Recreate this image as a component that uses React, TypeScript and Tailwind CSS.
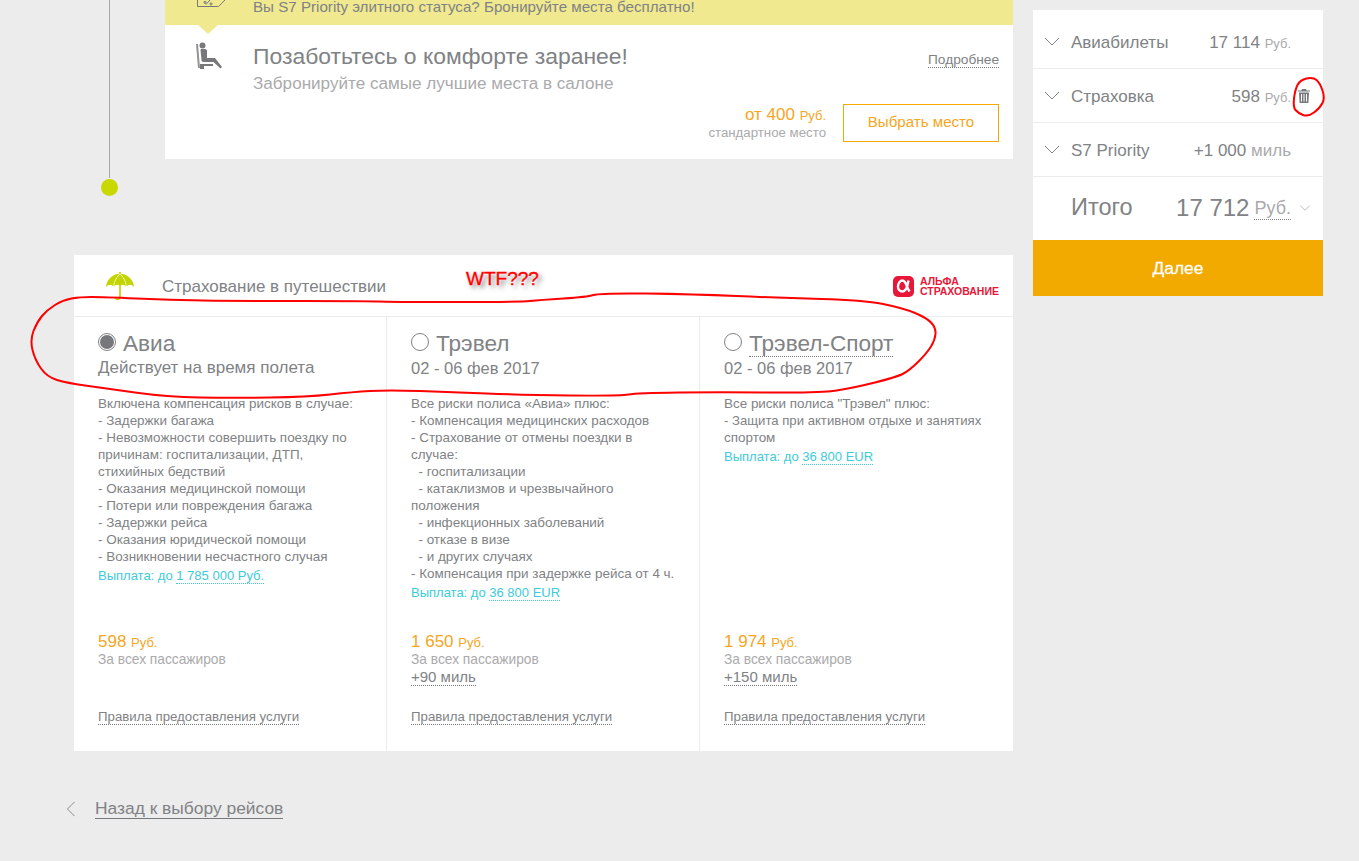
import React from "react";

const Chevron = ({ className = "" }: { className?: string }) => (
  <svg viewBox="0 0 16 9" className={className} fill="none" stroke="currentColor" strokeWidth="1">
    <path d="M1 1l7 7 7-7" />
  </svg>
);

const Dotted = ({ children, className = "" }: { children: React.ReactNode; className?: string }) => (
  <span className={`border-b border-dotted ${className}`}>{children}</span>
);

const SummaryRow = ({
  label,
  value,
  unit,
  trash,
  h,
}: {
  label: string;
  value: string;
  unit: string;
  trash?: boolean;
  h: string;
}) => (
  <div className={`relative flex items-center border-b-[1px] border-[#ececec] pl-[11px] pr-[32px] ${h}`}>
    <Chevron className="mb-[3px] h-[9px] w-[16px] text-[#808285]" />
    <span className="ml-[11px] text-[17px] text-[#808285]">{label}</span>
    <span className="ml-auto text-[17px] text-[#808285]">
      {value} <span className={unit === "Руб." ? "text-[13px] text-[#aaaaac]" : "text-[17px] text-[#aaaaac]"}>{unit}</span>
    </span>
    {trash && (
      <svg viewBox="0 0 12 14" className="absolute left-[265px] top-[20px] h-[14px] w-[12px] text-[#77787b]" fill="currentColor">
        <path d="M4 0h4l.6 1.4H12v1.2H0V1.4h3.4zM1 3.4h10L10.4 14H1.6zM3 5v7.6h1V5zm2.5 0v7.6h1V5zM8 5v7.6h1V5z" />
      </svg>
    )}
  </div>
);

const Radio = ({ on }: { on?: boolean }) => (
  <span className="mt-[3px] flex h-[18px] w-[18px] shrink-0 items-center justify-center rounded-full border border-[#808285] bg-white">
    {on && <span className="h-[14px] w-[14px] rounded-full bg-[#77787b]" />}
  </span>
);

type Col = {
  title: string;
  titleDotted?: boolean;
  on?: boolean;
  sub: string;
  lines: string[];
  payout: string;
  price: string;
  miles?: string;
  border?: boolean;
};

const cols: Col[] = [
  {
    title: "Авиа",
    on: true,
    sub: "Действует на время полета",
    lines: [
      "Включена компенсация рисков в случае:",
      "- Задержки багажа",
      "- Невозможности совершить поездку по",
      "причинам: госпитализации, ДТП,",
      "стихийных бедствий",
      "- Оказания медицинской помощи",
      "- Потери или повреждения багажа",
      "- Задержки рейса",
      "- Оказания юридической помощи",
      "- Возникновении несчастного случая",
    ],
    payout: "1 785 000 Руб.",
    price: "598",
    border: true,
  },
  {
    title: "Трэвел",
    sub: "02 - 06 фев 2017",
    lines: [
      "Все риски полиса «Авиа» плюс:",
      "- Компенсация медицинских расходов",
      "- Страхование от отмены поездки в",
      "случае:",
      "\u00a0\u00a0- госпитализации",
      "\u00a0\u00a0- катаклизмов и чрезвычайного",
      "положения",
      "\u00a0\u00a0- инфекционных заболеваний",
      "\u00a0\u00a0- отказе в визе",
      "\u00a0\u00a0- и других случаях",
      "- Компенсация при задержке рейса от 4 ч.",
    ],
    payout: "36 800 EUR",
    price: "1 650",
    miles: "+90 миль",
    border: true,
  },
  {
    title: "Трэвел-Спорт",
    titleDotted: true,
    sub: "02 - 06 фев 2017",
    lines: [
      'Все риски полиса "Трэвел" плюс:',
      "- Защита при активном отдыхе и занятиях",
      "спортом",
    ],
    payout: "36 800 EUR",
    price: "1 974",
    miles: "+150 миль",
  },
];

const InsuranceColumn = ({ c }: { c: Col }) => (
  <div className={`flex w-[313px] flex-col pl-[24px] pr-[8px] ${c.border ? "border-r border-[#ececec]" : ""}`}>
    <div className="mt-[13px] flex h-[28px] items-start gap-[7px]">
      <Radio on={c.on} />
      <span className={`mt-[1px] text-[22.6px] leading-[25px] text-[#808285] ${c.titleDotted ? "border-b border-dotted border-[#77787b]" : ""}`}>
        {c.title}
      </span>
    </div>
    <div className={`mt-[-1px] leading-[22px] text-[#808285] ${c.on ? "text-[17px]" : "text-[16.5px]"}`}>{c.sub}</div>
    <div className="mt-[16px] h-[238px] text-[13.45px] leading-[17px] text-[#808285]">
      {c.lines.map((l, i) => (
        <div key={i} className={l.startsWith("- Защита") ? "text-[13.15px]" : ""}>
          {l}
        </div>
      ))}
      <div className="mt-[2px] text-[13px] text-[#3ccbda]">
        Выплата: до <Dotted className="border-[#3ccbda]">{c.payout}</Dotted>
      </div>
    </div>
    <div className="text-[17px] leading-[18px] text-[#f5a623]">
      {c.price} <span className="text-[13px]">Руб.</span>
    </div>
    <div className="text-[13.75px] leading-[16px] text-[#aaaaac]">За всех пассажиров</div>
    <div className="h-[20px] text-[15px] leading-[18px] text-[#808285]">
      {c.miles && <Dotted className="border-[#77787b]">{c.miles}</Dotted>}
    </div>
    <div className="mt-[20px] text-[13.25px] leading-[17px] text-[#808285]">
      <Dotted className="border-[#77787b]">Правила предоставления услуги</Dotted>
    </div>
  </div>
);

const smooth = (pts: number[][]) => {
  let d = `M${(pts[0][0] + pts[pts.length - 1][0]) / 2} ${(pts[0][1] + pts[pts.length - 1][1]) / 2}`;
  pts.forEach((p, i) => {
    const n = pts[(i + 1) % pts.length];
    d += `Q${p[0]} ${p[1]} ${(p[0] + n[0]) / 2} ${(p[1] + n[1]) / 2}`;
  });
  return d;
};

const loop = [
  [80, 297], [63, 300], [47, 310], [37, 322], [30, 340], [35, 360], [47, 377], [67, 383], [103, 388], [167, 397],
  [233, 398], [307, 397], [353, 392], [387, 390], [453, 392], [520, 395], [620, 396], [637, 393], [720, 392],
  [820, 393], [853, 388], [897, 377], [910, 370], [927, 353], [935, 340], [936, 328], [927, 318], [903, 308],
  [863, 300], [780, 298], [693, 294], [600, 293], [587, 297], [540, 300], [520, 302], [387, 302], [370, 301],
  [237, 301], [170, 300], [103, 297],
];
const ring = [
  [1300, 80], [1313, 77], [1320, 83], [1325, 98], [1320, 108], [1308, 117], [1298, 113], [1293, 107], [1295, 90],
];

export default function App() {
  return (
    <div className="relative flex h-[861px] w-[1359px] overflow-hidden bg-[#ececec] pr-[36px] font-['Liberation_Sans',Arial,sans-serif]">
      <div className="ml-[65px] flex w-[948px] flex-col">
        {/* top section */}
        <div className="flex h-[255px] items-start">
          <div className="flex h-[197px] w-[100px] flex-col items-center">
            <div className="ml-[-12px] flex h-full flex-col items-center">
              <div className="h-[178px] w-px bg-[#a7a7a7]" />
              <div className="mt-px h-[17px] w-[17px] rounded-full bg-[#c9d800]" />
            </div>
          </div>
          <div className="w-[848px]">
            <div className="flex h-[25px] items-start bg-[#f0e990]">
              <svg viewBox="0 0 28 8" className="ml-[32px] h-[8px] w-[28px] shrink-0 text-[#77787b]" fill="none" stroke="currentColor" strokeWidth="1">
                <path d="M.5 0v6.500h21L28 0" />
                <path d="M9 4.500L13 0M8 1.500a1 1 0 1 0 .01 0M14 3a1 1 0 1 0 .01 0" />
              </svg>
              <div className="ml-[28px] text-[15.15px] leading-[14px] text-[#808285]">
                Вы S7 Priority элитного статуса? Бронируйте места бесплатно!
              </div>
            </div>
            <div className="relative h-[134px] bg-white">
              <div className="absolute left-[33px] top-0 h-0 w-0 border-x-[10px] border-t-[9px] border-x-transparent border-t-[#f0e990]" />
              <div className="flex">
                <svg viewBox="0 0 26 28" className="ml-[31px] mt-[17px] h-[28px] w-[26px] shrink-0 text-[#77787b]" fill="currentColor">
                  <circle cx="6.500" cy="3.500" r="3" />
                  <path d="M0 2h2l2 24H2z" opacity=".8" />
                  <path d="M4.500 8c0-1 .5-1 1.500-1h3c1.500 0 2 1 2 2v7h8l7 9-1.500 1.500L17.500 20H8c-2 0-2.500-1-2.500-2z" />
                  <path d="M4 22h13v2H8v3H4z" />
                </svg>
                <div className="ml-[31px] mt-[16px] flex-1 pr-[14px]">
                  <div className="flex items-start justify-between">
                    <div className="text-[22.9px] leading-[30px] text-[#808285]">Позаботьтесь о комфорте заранее!</div>
                    <div className="mt-[11px] text-[13.7px] leading-[16px] text-[#808285]">
                      <Dotted className="border-[#77787b]">Подробнее</Dotted>
                    </div>
                  </div>
                  <div className="mt-[2px] text-[17.1px] leading-[22px] text-[#aaaaac]">
                    Забронируйте самые лучшие места в салоне
                  </div>
                  <div className="mt-[9px] flex items-center justify-end">
                    <div className="text-right">
                      <div className="text-[17px] leading-[20px] text-[#f5a623]">
                        от 400 <span className="text-[13px]">Руб.</span>
                      </div>
                      <div className="mt-[-1px] pb-px text-[13.25px] leading-[16px] text-[#aaaaac]">стандартное место</div>
                    </div>
                    <div className="ml-[17px] flex h-[38px] w-[156px] items-center justify-center border border-[#f2a900] pb-[2px] text-[15.1px] text-[#f5a623]">
                      Выбрать место
                    </div>
                  </div>
                </div>
              </div>
            </div>
          </div>
        </div>

        {/* insurance */}
        <div className="ml-[9px] w-[939px] bg-white">
          <div className="flex h-[62px] items-center border-b border-[#ececec] pl-[31px] pr-[14px]">
            <svg viewBox="0 0 30 30" className="h-[28px] w-[30px] shrink-0 text-[#c3d500]">
              <path d="M15 0v27c0 3-5 3-5 0" fill="none" stroke="currentColor" strokeWidth="1.800" />
              <path d="M0 16C1 7 8 2 15 2s14 5 15 14c-3-3-6-3-8 0-2-3-5-3-7-1-2-2-5-2-7 1-2-3-5-3-8 0z" fill="currentColor" />
              <path d="M8 16C9 9 12 5 15 2M22 16c-1-7-4-11-7-14" stroke="#fff" strokeWidth=".8" fill="none" />
            </svg>
            <div className="ml-[27px] mt-[2px] text-[17px] text-[#808285]">Страхование в путешествии</div>
            <div className="ml-auto mt-[2px] flex items-center gap-[6px]">
              <svg viewBox="0 0 21 21" className="h-[21px] w-[21px] shrink-0">
                <rect width="21" height="21" rx="5" fill="#e8173a" />
                <path d="M15.500 4.500c-1 6-2.500 11-6 11-3 0-4.500-2.500-4.500-5 0-3 2-6 4.500-6 3.500 0 4 6.500 7 11" fill="none" stroke="#fff" strokeWidth="2.400" />
              </svg>
              <div className="text-[10.5px] font-bold leading-[9.500px] text-[#e8173a]">
                АЛЬФА
                <br />
                СТРАХОВАНИЕ
              </div>
            </div>
          </div>
          <div className="flex h-[434px]">
            {cols.map((c) => (
              <InsuranceColumn key={c.title} c={c} />
            ))}
          </div>
        </div>

        {/* back */}
        <div className="mt-[48px] flex items-center">
          <svg viewBox="0 0 10 18" className="ml-px h-[16px] w-[10px] shrink-0 text-[#808285]" fill="none" stroke="currentColor">
            <path d="M9 1L1 9l8 8" />
          </svg>
          <span className="ml-[19px] border-b border-[#77787b] text-[17.4px] leading-[19px] text-[#808285]">Назад к выбору рейсов</span>
        </div>
      </div>

      {/* right summary */}
      <div className="ml-[20px] mt-[10px] h-[286px] w-[290px] bg-white">
        <SummaryRow label="Авиабилеты" value="17 114" unit="Руб." h="h-[59px] pt-[7px]" />
        <SummaryRow label="Страховка" value="598" unit="Руб." trash h="h-[54px] pt-[2px]" />
        <SummaryRow label="S7 Priority" value="+1 000" unit="миль" h="h-[54px] pt-[2px]" />
        <div className="flex h-[63px] items-center pb-[2px] pl-[38px] pr-[12px] text-[#808285]">
          <span className="text-[23.5px]">Итого</span>
          <span className="ml-auto text-[24px]">17 712</span>
          <span className="ml-[5px] mt-[2px] border-b border-dotted border-[#808285] text-[18px] leading-[22px] text-[#aaaaac]">Руб.</span>
          <Chevron className="ml-[8px] h-[6px] w-[12px] text-[#999999]" />
        </div>
        <div className="flex h-[56px] items-center justify-center bg-[#f2a900] text-[17.4px] text-white [-webkit-text-stroke:0.3px_#fff]">Далее</div>
      </div>

      {/* hand-drawn annotations over the screenshot */}
      <svg className="pointer-events-none absolute left-0 top-0 h-[861px] w-[1359px]" viewBox="0 0 1359 861" fill="none" stroke="#ff0000" strokeWidth="2" strokeLinejoin="round">
        <path d={smooth(loop)} />
        <path d={smooth(ring)} />
      </svg>
      <div className="pointer-events-none absolute left-[466px] top-[269px] text-[19px] leading-[20px] text-[#ff0000] [-webkit-text-stroke:0.4px_#ff0000] [text-shadow:0_0_2px_#fff,0_0_2px_#fff,3px_3px_5px_rgba(0,0,0,0.55)]">
        WTF???
      </div>
    </div>
  );
}
